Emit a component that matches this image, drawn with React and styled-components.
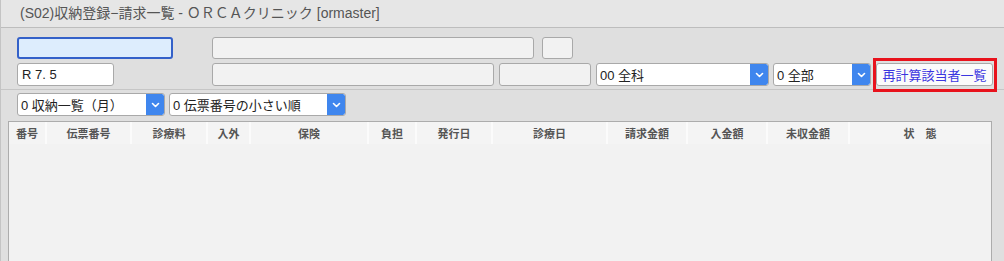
import React from 'react'
import styled, { createGlobalStyle } from 'styled-components'

const GlobalStyle = createGlobalStyle`
html, body {
  margin: 0;
  padding: 0;
  background: #dfdfdf;
}
* {
  box-sizing: border-box;
}
`

const columns = [
    { label: '番号', width: 38 },
    { label: '伝票番号', width: 85 },
    { label: '診療料', width: 76 },
    { label: '入外', width: 43 },
    { label: '保険', width: 118 },
    { label: '負担', width: 48 },
    { label: '発行日', width: 76 },
    { label: '診療日', width: 115 },
    { label: '請求金額', width: 80 },
    { label: '入金額', width: 80 },
    { label: '未収金額', width: 82 },
    { label: '状　態', width: 140 },
]

const Chevron = () => (
    <svg width="9" height="6" viewBox="0 0 9 6">
        <path d="M1.5 1.5 L4.5 4.5 L7.5 1.5" fill="none" stroke="#fff" strokeWidth="1.6" strokeLinecap="round" strokeLinejoin="round" />
    </svg>
)

const Select = ({ value, width, ml }) => (
    <SelectBox $w={width} $ml={ml}>
        <SelectText>{value}</SelectText>
        <SelectButton><Chevron /></SelectButton>
    </SelectBox>
)

const App = () => {
    return (
        <Page>
            <GlobalStyle />
            <TitleBar>(S02)収納登録−請求一覧 - ＯＲＣＡクリニック [ormaster]</TitleBar>
            <Form>
                <Row>
                    <Input $w={156} $focus />
                    <Input $w={322} $ml={39} $disabled />
                    <Input $w={31} $ml={8} $disabled />
                </Row>
                <Row $mt={4}>
                    <Input $w={97} value="R 7. 5" readOnly />
                    <Input $w={282} $ml={98} $disabled />
                    <Input $w={92} $ml={5} $disabled />
                    <Select value="00 全科" width={173} ml={5} />
                    <Select value="0 全部" width={98} ml={4} />
                    <Highlight>
                        <Button>再計算該当者一覧</Button>
                    </Highlight>
                </Row>
            </Form>
            <Divider />
            <SortRow>
                <Select value="0 収納一覧（月）" width={148} />
                <Select value="0 伝票番号の小さい順" width={177} ml={4} />
            </SortRow>
            <Table>
                <HeaderRow>
                    {columns.map(c => (
                        <HeaderCell key={c.label} $w={c.width}>{c.label}</HeaderCell>
                    ))}
                </HeaderRow>
                <Body />
            </Table>
        </Page>
    )
}

const Page = styled.div`
width: 1004px;
height: 261px;
overflow: hidden;
background: #dfdfdf;
border-left: 1px solid #c4c4c4;
font-family: "Liberation Sans", "Noto Sans CJK JP", sans-serif;
`

const TitleBar = styled.div`
height: 28px;
line-height: 27px;
padding-left: 19px;
font-size: 14px;
color: #555;
background: #e6e6e6;
border-bottom: 1px solid #bdbdbd;
white-space: nowrap;
`

const Form = styled.div`
padding: 9px 0 0 16px;
`

const Row = styled.div`
display: flex;
align-items: stretch;
height: ${p => p.$mt ? 23 : 22}px;
margin-top: ${p => p.$mt || 0}px;
`

const Input = styled.input`
width: ${p => p.$w}px;
margin-left: ${p => p.$ml || 0}px;
height: 100%;
padding: 0 4px;
font-family: inherit;
font-size: 13px;
color: #222;
border-radius: 3px;
outline: none;
background: ${p => p.$focus ? '#ddedfd' : p.$disabled ? '#f2f2f2' : '#fff'};
border: ${p => p.$focus ? '2px solid #3461c9' : '1px solid #a9a9a9'};
`

const SelectBox = styled.div`
display: flex;
width: ${p => p.$w}px;
margin-left: ${p => p.$ml || 0}px;
height: 100%;
background: #fff;
border: 1px solid #a9a9a9;
border-radius: 3px;
overflow: hidden;
`

const SelectText = styled.div`
flex: 1;
display: flex;
align-items: center;
padding-left: 3px;
font-size: 13px;
color: #222;
white-space: nowrap;
overflow: hidden;
`

const SelectButton = styled.div`
width: 18px;
display: flex;
align-items: center;
justify-content: center;
background: #3f86ee;
border-radius: 0 2px 2px 0;
`

const Highlight = styled.div`
position: relative;
margin-left: 5px;
display: flex;
&::after {
  content: '';
  position: absolute;
  left: -3px;
  right: -4px;
  top: -5px;
  bottom: -6px;
  border: 3px solid #e8121c;
  pointer-events: none;
}
`

const Button = styled.button`
width: 117px;
height: 100%;
padding: 0;
font-family: inherit;
font-size: 13px;
color: #3b36e0;
background: #fbfbfb;
border: 1px solid #a9a9a9;
border-radius: 3px;
white-space: nowrap;
`

const Divider = styled.div`
margin-top: 3px;
height: 1px;
background: #c6c6c6;
`

const SortRow = styled.div`
display: flex;
height: 23px;
margin: 3px 0 0 16px;
`

const Table = styled.div`
margin: 5px 12px 0 7px;
height: 140px;
border: 1px solid #acacac;
border-bottom: none;
background: #f2f2f2;
display: flex;
flex-direction: column;
`

const HeaderRow = styled.div`
display: flex;
height: 22px;
`

const HeaderCell = styled.div`
width: ${p => p.$w}px;
flex-shrink: 0;
display: flex;
align-items: center;
justify-content: center;
font-size: 11px;
font-weight: bold;
color: #555;
background: #f4f4f4;
border-right: 2px solid #fbfbfb;
&:last-child {
  border-right: none;
}
`

const Body = styled.div`
flex: 1;
background: #f2f2f2;
`

export default App
